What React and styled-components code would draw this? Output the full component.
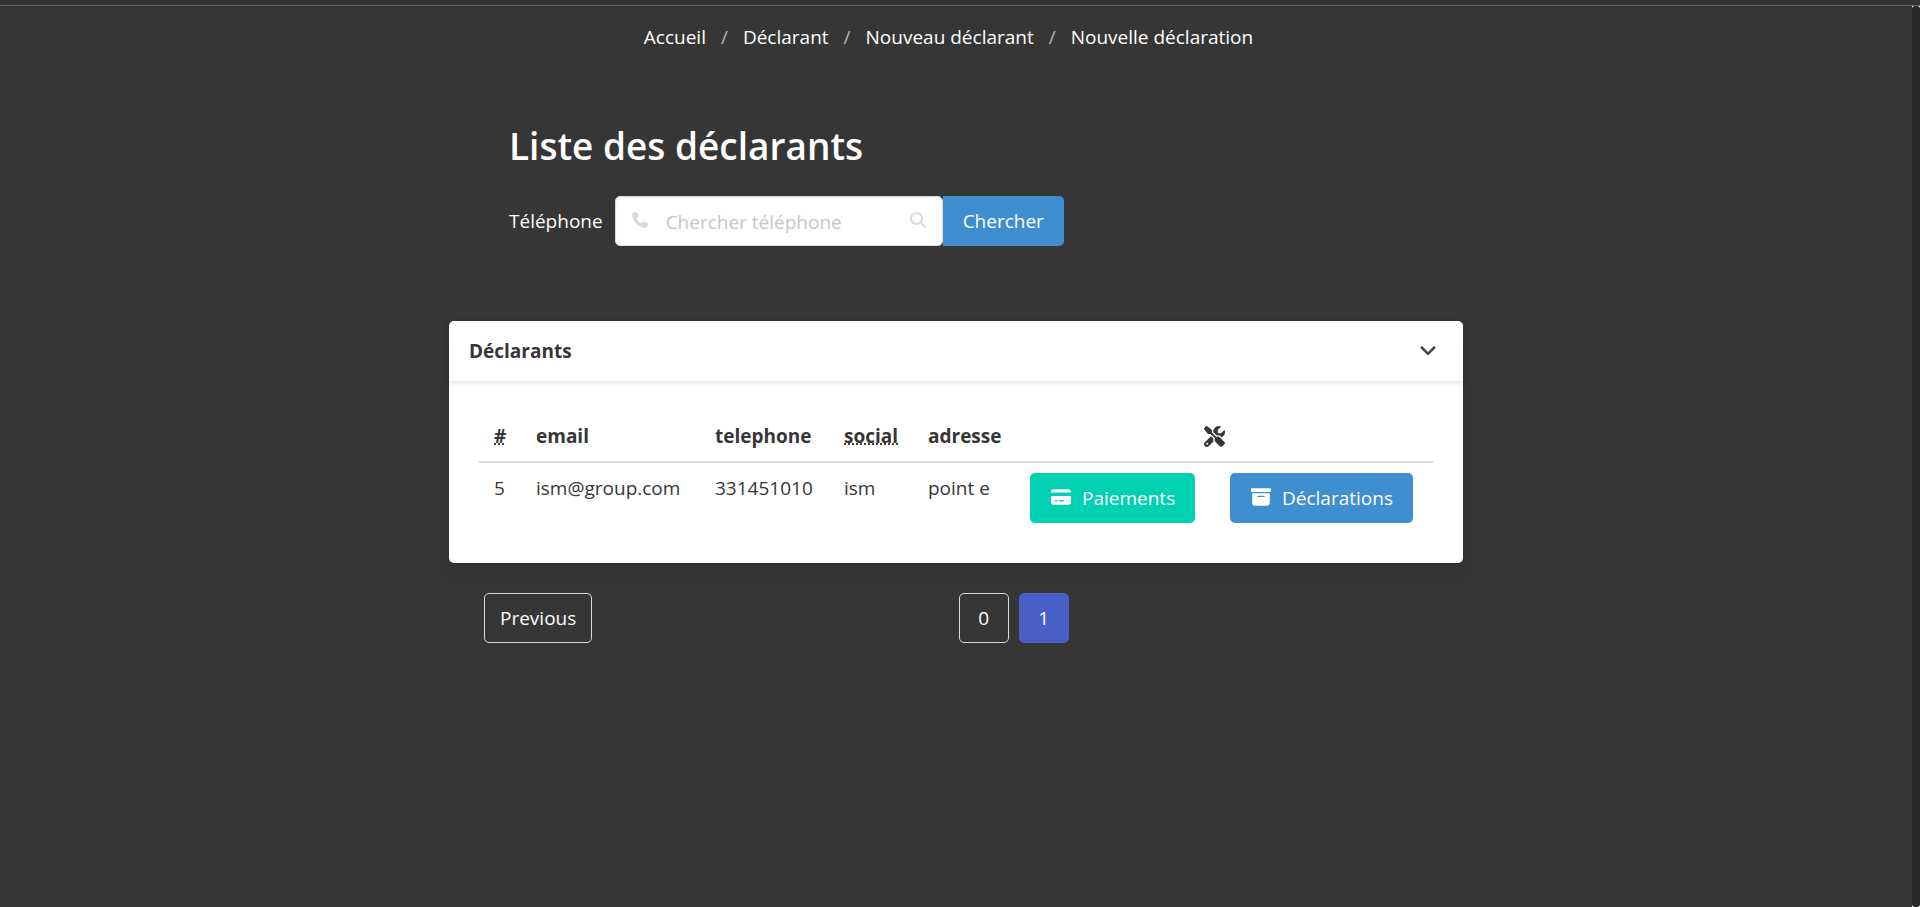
import React from "react";
import styled, { createGlobalStyle } from "styled-components";
import {
  FaAngleDown,
  FaBoxArchive,
  FaCreditCard,
  FaMagnifyingGlass,
  FaPhone,
  FaScrewdriverWrench,
} from "react-icons/fa6";

const Global = createGlobalStyle`
  *, *::before, *::after { box-sizing: border-box; }
  body {
    margin: 0;
    background: #363636;
    color: #363636;
    font-family: "Open Sans", "Noto Sans", sans-serif;
    font-size: 19px;
    line-height: 30px;
  }
  button, input { font: inherit; }
`;

const Page = styled.div`
  min-height: 100vh;
  display: flex;
  flex-direction: column;
`;

const TopEdge = styled.div`
  height: 6px;
  background: #333;
  border-bottom: 1px solid #666;
`;

const Body = styled.div`
  flex: 1;
  display: flex;
`;

const Main = styled.main`
  flex: 1;
  min-width: 0;
`;

const ScrollTrack = styled.div`
  width: 8px;
  display: flex;
  background: #fff;
`;

const ScrollThumb = styled.div`
  flex: 1;
  border-radius: 3px;
  background: #282828;
`;

const Breadcrumb = styled.nav`
  padding-top: 16px;

  ol {
    display: flex;
    flex-wrap: wrap;
    justify-content: center;
    margin: 0;
    padding: 0;
    list-style: none;
  }
  li + li::before {
    content: "/";
    color: #b5b5b5;
  }
`;

const Crumb = styled.a`
  padding: 0 15px;
  color: #fff;
  text-decoration: none;

  li:first-child > & { padding-left: 0; }
`;

const Wrapper = styled.div`
  max-width: 1014px;
  margin: 0 auto;
`;

const Search = styled.section`
  padding: 72px 60px 75px;
`;

const Title = styled.h1`
  margin: 0 0 28px;
  color: #fff;
  font-size: 37px;
  font-weight: 600;
  line-height: 44px;
`;

const SearchForm = styled.form`
  display: flex;
  align-items: center;
`;

const Label = styled.label`
  margin-right: 12px;
  color: #fff;
`;

const Field = styled.div`
  position: relative;
  width: 328px;
`;

const Input = styled.input`
  display: block;
  width: 100%;
  height: 50px;
  padding: 2px 50px 0;
  border: 1px solid #dbdbdb;
  border-radius: 5px;
  background: #fff;
  color: #363636;
  box-shadow: inset 0 1px 2px rgba(10, 10, 10, 0.05);

  &::placeholder { color: #c6c6c6; opacity: 1; }
`;

const FieldIcon = styled.span`
  position: absolute;
  top: 0;
  ${(p) => p.$side}: 0;
  display: flex;
  align-items: center;
  justify-content: center;
  width: 50px;
  height: 50px;
  padding-bottom: 2px;
  color: #dbdbdb;
  font-size: 16px;
  pointer-events: none;
`;

const Button = styled.button`
  display: inline-flex;
  align-items: center;
  justify-content: center;
  height: 50px;
  padding: 0 20px;
  border: 0;
  border-radius: ${(p) => (p.$attached ? "0 5px 5px 0" : "5px")};
  background: ${(p) => p.$color};
  color: #fff;
  white-space: nowrap;
  cursor: pointer;
`;

const ButtonIcon = styled.span`
  display: inline-flex;
  align-items: center;
  justify-content: center;
  width: 30px;
  height: 30px;
  margin: 0 6px 0 -4px;
  padding-bottom: 2px;
  font-size: 20px;
`;

const Card = styled.section`
  border-radius: 5px;
  background: #fff;
  box-shadow: 0 10px 20px -2px rgba(10, 10, 10, 0.1), 0 0 0 1px rgba(10, 10, 10, 0.02);
`;

const CardHeader = styled.header`
  display: flex;
  align-items: center;
  justify-content: space-between;
  height: 60px;
  padding: 0 20px;
  box-shadow: 0 2px 5px rgba(10, 10, 10, 0.1);
`;

const CardTitle = styled.h2`
  margin: 0;
  font-size: 19px;
  font-weight: 700;
`;

const Toggle = styled.button`
  display: flex;
  align-items: center;
  justify-content: center;
  width: 30px;
  height: 30px;
  padding: 0 0 2px;
  border: 0;
  background: none;
  color: #4a4a4a;
  font-size: 20px;
  cursor: pointer;
`;

const CardContent = styled.div`
  padding: 30px;
  overflow-x: auto;
`;

const Table = styled.table`
  width: 100%;
  min-width: 954px;
  table-layout: fixed;
  border-collapse: separate;
  border-spacing: 0;
  white-space: nowrap;
`;

const Col = styled.col`
  width: ${(p) => p.$width}px;
`;

const Th = styled.th`
  height: 52px;
  padding: 10px 15px;
  border-bottom: 2px solid #dbdbdb;
  font-weight: 700;
  text-align: ${(p) => p.$align || "left"};

  svg { display: block; margin: 0 auto; font-size: 21px; }
  abbr { text-decoration: underline dotted; }
`;

const Td = styled.td`
  padding: 10px 15px;
  vertical-align: top;

  button { display: flex; }
`;

const EndCell = styled.td`
  padding: 0;
  border-bottom: ${(p) => (p.$head ? "2px solid #dbdbdb" : "0")};
`;

const Pagination = styled.nav`
  display: flex;
  align-items: center;
  padding: 30px 28px 30px 35px;
`;

const Pages = styled.ul`
  flex: 1;
  display: flex;
  justify-content: center;
  gap: 10px;
  margin: 0;
  padding: 0;
  list-style: none;
`;

const PageButton = styled.button`
  min-width: 50px;
  height: 50px;
  padding: 0 15px;
  border: 1px solid ${(p) => (p.$current ? "#485fc7" : "#dbdbdb")};
  border-radius: 5px;
  background: ${(p) => (p.$current ? "#485fc7" : "transparent")};
  color: #fff;
  cursor: pointer;
`;

const crumbs = ["Accueil", "Déclarant", "Nouveau déclarant", "Nouvelle déclaration"];
const columns = [42, 179, 129, 84, 102, 200, 199, 19];
const rows = [
  { id: 5, email: "ism@group.com", telephone: "331451010", social: "ism", adresse: "point e" },
];

export default function App() {
  return (
    <Page>
      <Global />
      <TopEdge />
      <Body>
        <Main>
          <Breadcrumb aria-label="breadcrumbs">
            <ol>
              {crumbs.map((c) => (
                <li key={c}>
                  <Crumb href="#">{c}</Crumb>
                </li>
              ))}
            </ol>
          </Breadcrumb>
          <Wrapper>
            <Search>
              <Title>Liste des déclarants</Title>
              <SearchForm onSubmit={(e) => e.preventDefault()}>
                <Label htmlFor="telephone">Téléphone</Label>
                <Field>
                  <Input id="telephone" type="text" placeholder="Chercher téléphone" />
                  <FieldIcon $side="left"><FaPhone /></FieldIcon>
                  <FieldIcon $side="right"><FaMagnifyingGlass /></FieldIcon>
                </Field>
                <Button type="submit" $color="#3e8ed0" $attached>Chercher</Button>
              </SearchForm>
            </Search>
            <Card>
              <CardHeader>
                <CardTitle>Déclarants</CardTitle>
                <Toggle type="button" aria-label="Déclarants"><FaAngleDown /></Toggle>
              </CardHeader>
              <CardContent>
                <Table>
                  <colgroup>
                    {columns.map((w, i) => <Col key={i} $width={w} />)}
                  </colgroup>
                  <thead>
                    <tr>
                      <Th><abbr>#</abbr></Th>
                      <Th>email</Th>
                      <Th>telephone</Th>
                      <Th><abbr>social</abbr></Th>
                      <Th>adresse</Th>
                      <Th colSpan={2} $align="center"><FaScrewdriverWrench /></Th>
                      <EndCell $head />
                    </tr>
                  </thead>
                  <tbody>
                    {rows.map((r) => (
                      <tr key={r.id}>
                        <Td>{r.id}</Td>
                        <Td>{r.email}</Td>
                        <Td>{r.telephone}</Td>
                        <Td>{r.social}</Td>
                        <Td>{r.adresse}</Td>
                        <Td>
                          <Button type="button" $color="#00d1b2">
                            <ButtonIcon><FaCreditCard /></ButtonIcon>
                            Paiements
                          </Button>
                        </Td>
                        <Td>
                          <Button type="button" $color="#3e8ed0">
                            <ButtonIcon><FaBoxArchive /></ButtonIcon>
                            Déclarations
                          </Button>
                        </Td>
                        <EndCell />
                      </tr>
                    ))}
                  </tbody>
                </Table>
              </CardContent>
            </Card>
            <Pagination aria-label="pagination">
              <PageButton type="button">Previous</PageButton>
              <Pages>
                <li><PageButton type="button">0</PageButton></li>
                <li><PageButton type="button" $current aria-current="page">1</PageButton></li>
              </Pages>
            </Pagination>
          </Wrapper>
        </Main>
        <ScrollTrack aria-hidden="true"><ScrollThumb /></ScrollTrack>
      </Body>
    </Page>
  );
}
